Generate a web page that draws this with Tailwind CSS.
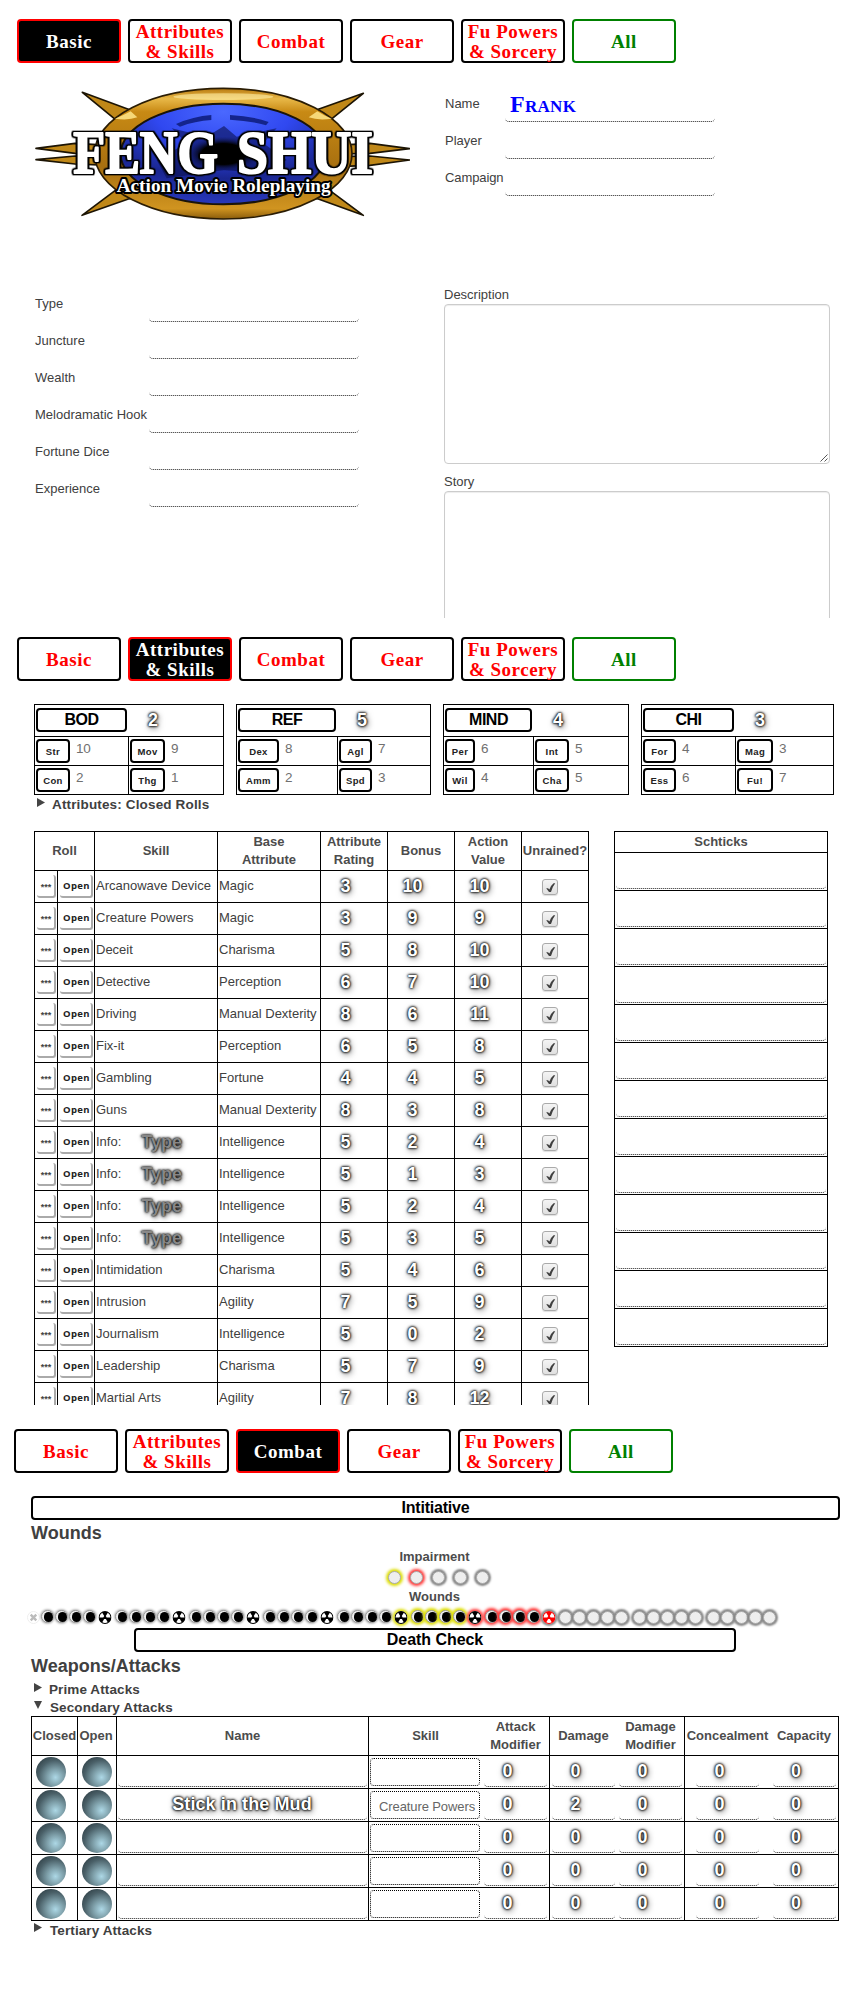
<!DOCTYPE html>
<html lang="en">
<head>
<meta charset="utf-8">
<title>Feng Shui Character Sheet</title>
<script src="https://cdn.jsdelivr.net/npm/@tailwindcss/browser@4"></script>
</head>
<body class="w-[851px] bg-white font-['Liberation_Sans',sans-serif] text-[13px] leading-[18px] text-[#404040]">

<!-- Basic -->
<section class="h-[618px] overflow-hidden pt-[19px]">
  <nav class="flex gap-[7px] pl-[17px]" data-tabs="0"></nav>
  <div class="mt-[22px] flex h-[200px] pl-[35px]">
    <div class="w-[409px]">
      <svg class="block" width="375" height="137" viewBox="105 255 1125 411">
        <defs>
          <linearGradient id="gold" x1="0" y1="0" x2="0" y2="1">
            <stop offset="0" stop-color="#b87a10"/><stop offset=".08" stop-color="#e8b848"/><stop offset=".18" stop-color="#c88a14"/><stop offset=".6" stop-color="#a87010"/><stop offset=".92" stop-color="#d09420"/><stop offset="1" stop-color="#8a5c0c"/>
          </linearGradient>
          <radialGradient id="blue" cx=".5" cy=".08" r=".95">
            <stop offset="0" stop-color="#4a68ff"/><stop offset=".35" stop-color="#3048f0"/><stop offset=".7" stop-color="#1a2690"/><stop offset="1" stop-color="#2a3ac0"/>
          </radialGradient>
          <radialGradient id="core"><stop offset="0" stop-color="#000"/><stop offset=".6" stop-color="#000"/><stop offset="1" stop-color="#101860" stop-opacity="0"/></radialGradient>
        </defs>
        <g fill="#c08818" stroke="#1c1404" stroke-width="5" stroke-linejoin="round">
          <path d="M247 277L385 328L450 400H330L343 356Z"/><path d="M1090 280L955 328L890 400H1010L996 356Z"/>
          <path d="M246 646L345 572L400 560L430 590L385 597Z"/><path d="M1090 646L990 572L930 560L900 590L955 597Z"/>
          <path d="M108 445L225 430L330 436V462L225 460Z"/><path d="M108 479L225 468L330 470V496L225 492Z"/>
          <path d="M1229 446L1110 430L1010 436V462L1110 460Z"/><path d="M1229 480L1110 468L1010 470V500L1110 496Z"/>
        </g>
        <ellipse cx="670" cy="461" rx="386" ry="196" fill="url(#gold)" stroke="#2a1c04" stroke-width="5"/>
        <ellipse cx="670" cy="290" rx="150" ry="10" fill="#fff0a8" opacity=".6"/>
        <path d="M345 356Q372 345 392 334L412 352Q385 362 345 356ZM995 356Q968 345 952 334L926 352Q955 362 995 356Z" fill="#f6d878"/>
        <ellipse cx="670" cy="462" rx="308" ry="151" fill="url(#blue)" stroke="#1a1408" stroke-width="6"/>
        <path d="M528 372Q580 349 634 345V360Q585 363 540 380ZM690 345Q755 348 806 366L798 376Q750 362 690 359Z" fill="#14248c"/>
        <path d="M470 480L560 430L515 385L620 410L672 378L710 410L830 385L790 430L860 480L790 520L672 510L500 535Z" fill="#0a1150" opacity=".6"/>
        <ellipse cx="670" cy="462" rx="110" ry="52" fill="url(#core)"/>
        <g fill="#fff" stroke-linejoin="round" font-family="Liberation Serif, serif" font-weight="700">
          <g class="[filter:drop-shadow(4px_0_0_#000)_drop-shadow(-4px_0_0_#000)_drop-shadow(0_4px_0_#000)_drop-shadow(0_-4px_0_#000)]" stroke="#fff" stroke-width="6" font-size="182">
            <text x="220" y="519" textLength="434" lengthAdjust="spacingAndGlyphs">FENG</text>
            <text x="711" y="519" textLength="408" lengthAdjust="spacingAndGlyphs">SHUI</text>
          </g>
          <text x="350" y="577" font-size="57" stroke="#000" stroke-width="12" paint-order="stroke" textLength="642" lengthAdjust="spacingAndGlyphs">Action Movie Roleplaying</text>
        </g>
      </svg>
    </div>
    <div>
      <div class="flex h-[37px]"><label class="w-[61px] pl-px pt-[10px]">Name</label><div class="w-[210px] rounded-[4px] border-b border-dotted border-[#222] pl-[5px] pt-[5px] font-['Liberation_Serif',serif] text-[24px] font-bold leading-7 tracking-[0.3px] text-[#00f] [font-variant:small-caps]">Frank</div></div>
      <div class="flex h-[37px]"><label class="w-[61px] pl-px pt-[10px]">Player</label><div class="w-[210px] rounded-[4px] border-b border-dotted border-[#222]"></div></div>
      <div class="flex h-[37px]"><label class="w-[61px] pl-px pt-[10px] tracking-[-0.1px]">Campaign</label><div class="w-[210px] rounded-[4px] border-b border-dotted border-[#222]"></div></div>
    </div>
  </div>
  <div class="flex pl-[35px]">
    <div class="w-[409px]" id="basic"></div>
    <div class="w-[386px] pt-px">
      <div class="h-[18px]">Description</div>
      <div class="flex h-[160px] items-end justify-end rounded-[4px] border border-[#ccc] shadow-[inset_0_1px_1px_rgba(0,0,0,0.075)]">
        <svg width="10" height="10" viewBox="0 0 10 10" stroke="#444" stroke-width=".9"><path d="M1.5 8.5L8.5 1.5M5.5 8.5L8.5 5.5"/></svg>
      </div>
      <div class="mt-[9px] h-[18px]">Story</div>
      <div class="h-[160px] rounded-[4px] border border-[#ccc] shadow-[inset_0_1px_1px_rgba(0,0,0,0.075)]"></div>
    </div>
  </div>
</section>

<!-- Attributes & Skills -->
<section class="h-[787px] overflow-hidden pt-[19px]">
  <nav class="flex gap-[7px] pl-[17px]" data-tabs="1"></nav>
  <div class="mt-[23px] flex gap-3 pl-[34px]" id="attrs"></div>
  <div class="flex h-[36px] items-start gap-[7px] pl-[37px]">
    <svg class="mt-[3px]" width="8" height="9"><path d="M0 0L8 4.5L0 9Z" fill="#444"/></svg>
    <div class="pt-px text-[13.5px] font-bold leading-[18px] tracking-[0.15px]">Attributes: Closed Rolls</div>
  </div>
  <div class="flex items-start gap-[25px] pl-[34px]">
    <div class="w-[555px] border-l border-t border-black" id="skills">
      <div class="grid h-[39px] grid-cols-[60px_123px_103px_67px_67px_67px_67px] text-center font-bold text-[#4c4c4c] *:flex *:items-center *:justify-center *:border-b *:border-r *:border-black">
        <div>Roll</div><div>Skill</div><div>Base<br>Attribute</div><div>Attribute<br>Rating</div><div>Bonus</div><div>Action<br>Value</div><div>Unrained?</div>
      </div>
    </div>
    <div class="w-[214px] border-x border-t border-black" id="schticks">
      <div class="h-[21px] border-b border-black pt-px text-center font-bold text-[#4c4c4c]">Schticks</div>
    </div>
  </div>
</section>

<!-- Combat -->
<section class="h-[595px] overflow-hidden pt-[24px]">
  <nav class="flex gap-[7px] pl-[14px]" data-tabs="2"></nav>
  <div class="mt-[23px] pl-[31px]">
    <div class="flex h-6 w-[809px] items-center justify-center rounded-[4px] border-2 border-black text-[16px] font-bold tracking-[-0.2px] text-black">Intitiative</div>
    <h2 class="h-[31px] pt-[3px] text-[18px] font-bold leading-5">Wounds</h2>
  </div>
  <div class="w-[869px] text-center font-bold text-[#4c4c4c]">
    <div class="h-[18px] -mt-[3px]">Impairment</div>
    <div class="flex h-[22px] items-center pl-[383px]" id="impair"></div>
    <div class="h-[18px]">Wounds</div>
  </div>
  <div class="flex h-[22px] items-center pl-[26px]" id="wounds"></div>
  <div class="ml-[134px] flex h-6 w-[602px] items-center justify-center rounded-[4px] border-2 border-black text-[16px] font-bold tracking-[-0.05px] text-black">Death Check</div>
  <div class="pl-[31px] font-bold">
    <h2 class="h-[28px] pt-[4px] text-[18px] leading-5">Weapons/Attacks</h2>
    <div class="flex h-[18px] gap-[7px] pl-[3px] text-[13.5px] tracking-[0.1px]"><svg class="mt-[3px]" width="8" height="9"><path d="M0 0L8 4.5L0 9Z" fill="#444"/></svg><span class="pt-px">Prime Attacks</span></div>
    <div class="flex h-[18px] gap-2 pl-[3px] text-[13.5px] tracking-[0.1px]"><svg class="mt-[3px]" width="8" height="9"><path d="M0 0H8L4 8Z" fill="#444"/></svg><span class="pt-px">Secondary Attacks</span></div>
    <div class="w-[808px] border-l border-t border-black text-[13px] font-normal" id="attacks">
      <div class="grid h-[39px] grid-cols-[46px_39px_252px_113px_68px_67px_68px_85px_69px] border-b border-black text-center font-bold text-[#4c4c4c] *:flex *:items-center *:justify-center">
        <div class="border-r border-black">Closed</div><div class="border-r border-black pr-0.5">Open</div><div class="border-r border-black">Name</div><div>Skill</div><div class="border-r border-black">Attack<br>Modifier</div><div>Damage</div><div class="border-r border-black">Damage<br>Modifier</div><div>Concealment</div><div class="border-r border-black">Capacity</div>
      </div>
    </div>
    <div class="flex h-[18px] gap-[8px] pl-[3px] pt-px text-[13.5px] tracking-[0.1px]"><svg class="mt-px" width="8" height="9"><path d="M0 0L8 4.5L0 9Z" fill="#444"/></svg>Tertiary Attacks</div>
  </div>
</section>

<script>
const GLOW = 'font-bold text-[18px] leading-5 text-white [text-shadow:0_0_2px_#000,0_0_3px_#000,0_0_3px_#0008,1px_2px_6px_#000a]';
const add = (id, html) => document.getElementById(id).insertAdjacentHTML('beforeend', html);

const tabs = ['Basic', 'Attributes<br>&amp; Skills', 'Combat', 'Gear', 'Fu Powers<br>&amp; Sorcery', 'All'];
document.querySelectorAll('[data-tabs]').forEach(nav => {
  nav.innerHTML = tabs.map((t, i) => {
    const tone = i == nav.dataset.tabs ? 'border-[#f00] bg-black text-white' : i == 5 ? 'border-[#008000] text-[#008000]' : 'border-black text-[#f00]';
    return `<div class="flex h-[44px] w-[104px] items-center justify-center rounded-[4px] border-2 pt-px text-center font-['Liberation_Serif',serif] text-[19px] font-bold leading-5 tracking-[0.5px] whitespace-nowrap ${tone}">${t.includes('<') ? `<span>${t}</span>` : t}</div>`;
  }).join('');
});

['Type', 'Juncture', 'Wealth', 'Melodramatic Hook', 'Fortune Dice', 'Experience'].forEach(l => add('basic',
  `<div class="flex h-[37px]"><label class="w-[114px] pt-[10px]">${l}</label><div class="w-[210px] rounded-[4px] border-b border-dotted border-[#222]"></div></div>`));

// name, rating, header button width, column widths, small button widths, sub-attributes
[
  ['BOD', 2, 91, [94, 95], [34, 35], ['Str', 10, 'Mov', 9, 'Con', 2, 'Thg', 1]],
  ['REF', 5, 98, [101, 93], [41, 33], ['Dex', 8, 'Agl', 7, 'Amm', 2, 'Spd', 3]],
  ['MIND', 4, 87, [90, 95], [30, 34], ['Per', 6, 'Int', 5, 'Wil', 4, 'Cha', 5]],
  ['CHI', 3, 91, [94, 98], [33, 36], ['For', 4, 'Mag', 3, 'Ess', 6, 'Fu!', 7]],
].forEach(([n, v, w, cols, bw, subs]) => {
  const cell = k => `<div class="flex h-[29px] gap-[6px] border-b border-r border-black pl-px pt-0.5" style="width:${cols[k % 2]}px"><div class="flex h-6 items-center justify-center rounded-[4px] border-2 border-black pt-px text-[9.5px] font-bold tracking-[0.4px] text-[#222]" style="width:${bw[k % 2]}px">${subs[2 * k]}</div><span class="pt-px text-[13.5px] tracking-[-0.3px] text-[#707070]">${subs[2 * k + 1]}</span></div>`;
  add('attrs', `<div class="border-l border-t border-black">
    <div class="flex h-8 border-b border-r border-black pl-px pt-[3px]"><div class="flex h-6 items-center justify-center rounded-[4px] border-2 border-black text-[16px] font-bold tracking-[-0.5px] text-black" style="width:${w}px">${n}</div><span class="${GLOW} w-[52px] pt-0.5 text-center">${v}</span></div>
    <div class="flex">${cell(0)}${cell(1)}</div><div class="flex">${cell(2)}${cell(3)}</div></div>`);
});

[
  ['Arcanowave Device', 'Magic', 3, 10, 10], ['Creature Powers', 'Magic', 3, 9, 9], ['Deceit', 'Charisma', 5, 8, 10],
  ['Detective', 'Perception', 6, 7, 10], ['Driving', 'Manual Dexterity', 8, 6, 11], ['Fix-it', 'Perception', 6, 5, 8],
  ['Gambling', 'Fortune', 4, 4, 5], ['Guns', 'Manual Dexterity', 8, 3, 8], ['Info:', 'Intelligence', 5, 2, 4],
  ['Info:', 'Intelligence', 5, 1, 3], ['Info:', 'Intelligence', 5, 2, 4], ['Info:', 'Intelligence', 5, 3, 5],
  ['Intimidation', 'Charisma', 5, 4, 6], ['Intrusion', 'Agility', 7, 5, 9], ['Journalism', 'Intelligence', 5, 0, 2],
  ['Leadership', 'Charisma', 5, 7, 9], ['Martial Arts', 'Agility', 7, 8, 12],
].forEach(([s, b, ...nums]) => add('skills', `<div class="grid h-8 grid-cols-[23px_37px_123px_103px_67px_67px_67px_67px] *:flex *:border-b *:border-r *:border-black">
  <div class="pl-0.5 pt-1"><div class="h-[23px] w-[19px] rounded-[3px] border-b-2 border-r-2 border-[#aaa] pl-px pt-[4px] text-center text-[9px] font-bold leading-4 text-[#444]">***</div></div>
  <div class="pl-0.5 pt-1"><div class="h-[23px] w-[33px] rounded-[3px] border-b-2 border-r-2 border-[#aaa] pl-0.5 pt-[3px] text-center font-['Open_Sans',sans-serif] text-[9.5px] font-bold leading-4 tracking-[0.4px] text-[#222]">Open</div></div>
  <div class="items-center pb-0.5 pl-px">${s}${s == 'Info:' ? `<span class="ml-[20px] text-[18px] font-bold leading-5 text-[#888] [text-shadow:0_0_2px_#000,0_0_3px_#000,1px_2px_5px_#000a]">Type</span>` : ''}</div>
  <div class="items-center pb-0.5 pl-px">${b}</div>
  ${nums.map(n => `<div class="items-center justify-center pb-0.5 pr-[17px] ${GLOW}">${n}</div>`).join('')}
  <div class="pl-5 pt-2"><div class="size-4 rounded-[3px] border border-[#aaa] bg-gradient-to-b from-[#f4f4f4] to-[#e0e0e0] shadow-[0_1px_1px_#0002]"><svg class="block" width="14" height="14" viewBox="0 0 14 14"><path d="M3.2 8.2H5L6.4 9.6Q8 5 10.6 3.2H12.2Q9.5 6.5 8 12H6Z" fill="#404040"/></svg></div></div>
</div>`));

for (let i = 0; i < 13; i++) add('schticks', '<div class="h-[38px] border-b border-black px-px pb-px"><div class="h-9 rounded-[4px] border-b border-dotted border-[#222]"></div></div>');

// Round tracker markers: an empty, filled or radiation circle with a coloured halo
const HALO = { none: 'shadow-[0_0_2px_1px_#bbb]', gray: 'shadow-[0_0_2px_2px_#888]', yellow: 'shadow-[0_0_3px_2px_#dd0]', red: 'shadow-[0_0_3px_2px_#f33]' };
const empty = h => `<div class="size-[13px] shrink-0 rounded-full border border-[#aaa] bg-[#eee] ${HALO[h]}"></div>`;
const dot = h => `<div class="size-[13px] shrink-0 rounded-full border border-[#999] bg-[#eee] pl-0.5 pt-px ${HALO[h]}"><div class="h-[10px] w-[9px] rounded-full bg-black"></div></div>`;
const blade = 'M-.9 -1.4L-2.7 -4.8A5.5 5.5 0 0 1 2.7 -4.8L.9 -1.4Z';
const rad = (h, c) => `<div class="mt-px size-[13px] shrink-0 translate-x-[1.5px] rounded-full ${h ? HALO[h] : ''}"><svg class="block" width="13" height="13" viewBox="-6.5 -6.5 13 13"><circle r="6.5" fill="${c}"/><g fill="#fff"><path d="${blade}" transform="rotate(60)"/><path d="${blade}" transform="rotate(180)"/><path d="${blade}" transform="rotate(300)"/></g></svg></div>`;
['yellow', 'red', 'gray', 'gray', 'gray'].forEach(h => add('impair', `<div class="flex w-[22px] justify-center">${empty(h)}</div>`));
add('wounds', `<div class="flex w-[14px] justify-center"><svg width="13" height="13" viewBox="-6.5 -6.5 13 13"><circle r="6" fill="none" stroke="#eee"/><path d="M-2.8 -2.8L2.8 2.8M2.8 -2.8L-2.8 2.8" stroke="#bbb" stroke-width="2.4"/></svg></div>`);
for (let g = 0; g < 10; g++) {
  const halo = g < 5 ? 'none' : g == 5 ? 'yellow' : g == 6 ? 'red' : 'gray';
  let cells = '';
  for (let i = 0; i < 5; i++) {
    const mark = g > 6 ? empty('gray') : i < 4 ? dot(halo) : rad(['', '', '', '', 'yellow', 'red', 'gray'][g], g == 6 ? '#f00' : '#000');
    cells += `<div class="flex w-[14px] justify-center">${mark}</div>`;
  }
  add('wounds', `<div class="mr-[4px] flex">${cells}</div>`);
}

for (let r = 0; r < 5; r++) {
  const mud = r == 1;
  const ball = '<div class="ml-1 mt-px size-[30px] rounded-full bg-[radial-gradient(circle_at_65%_68%,#add8e6_0%,#7d9ea8_30%,#4a6068_60%,#26343a_95%)]"></div>';
  const num = (n, edge) => `<div class="flex justify-center pb-px ${edge}"><div class="h-[31px] w-[63px] rounded-[4px] border-b border-dotted border-[#222] pr-[16px] pt-[5px] text-center ${GLOW}">${n}</div></div>`;
  add('attacks', `<div class="grid h-[33px] grid-cols-[46px_39px_252px_113px_68px_67px_68px_85px_69px] border-b border-black">
    <div class="border-r border-black">${ball}</div><div class="border-r border-black">${ball}</div>
    <div class="border-r border-black px-px"><div class="h-[31px] rounded-[4px] border-b border-dotted border-[#222] pr-px pt-[5px] text-center tracking-[0.1px] ${GLOW}">${mud ? 'Stick in the Mud' : ''}</div></div>
    <div class="pl-px pt-0.5"><div class="h-7 w-[110px] rounded-[4px] border border-dotted border-black pl-2 pt-[6px] tracking-[-0.1px] whitespace-nowrap text-[#666]">${mud ? 'Creature Powers' : ''}</div></div>
    ${num(0, 'border-r border-black')}${num(mud ? 2 : 0, '')}${num(0, 'border-r border-black')}${num(0, '')}${num(0, 'border-r border-black')}</div>`);
}
</script>
</body>
</html>
